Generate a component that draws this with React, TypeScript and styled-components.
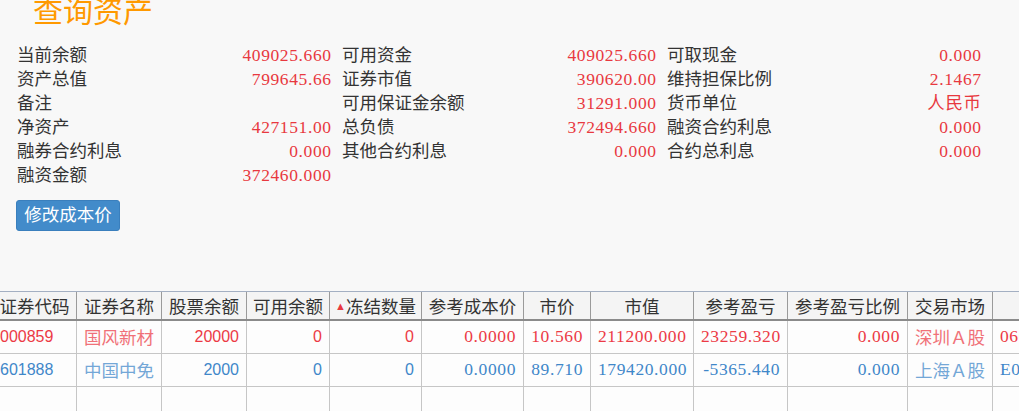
import React from 'react';
import styled, { createGlobalStyle } from 'styled-components';

const GlobalStyle = createGlobalStyle`
  html, body {
    margin: 0;
    padding: 0;
    background: #f8f8f8;
    overflow: hidden;
  }
  body {
    font-family: "Liberation Serif", "Noto Sans CJK SC", serif;
    color: #333;
  }
`;

const Page = styled.div`
  width: 1019px;
  height: 411px;
  overflow: hidden;
`;

const Title = styled.h1`
  margin: -3px 0 0 33px;
  height: 30px;
  font-size: 30px;
  line-height: 30px;
  font-weight: normal;
  color: #ff9900;
`;

const InfoGrid = styled.div`
  display: grid;
  grid-template-columns: repeat(3, 314px);
  column-gap: 11px;
  margin-top: 16px;
  padding-left: 17px;
  font-size: 17.5px;
  line-height: 24px;
`;

const InfoCell = styled.div`
  display: flex;
  justify-content: space-between;
  white-space: nowrap;
`;

const Label = styled.span`
  color: #333;
`;

const Value = styled.span`
  color: #e8383f;
  letter-spacing: 0.6px;
  margin-right: -0.6px;
`;

const ActionButton = styled.button`
  display: block;
  margin: 13px 0 0 16px;
  width: 104px;
  height: 31px;
  padding: 0;
  border: 1px solid #3a7fbd;
  border-radius: 3px;
  background: #428bca;
  color: #fff;
  font-family: inherit;
  font-size: 17.5px;
  line-height: 29px;
  cursor: pointer;
`;

const TableWrap = styled.div`
  margin: 60px 0 0 -8px;
`;

const Table = styled.table`
  table-layout: fixed;
  border-collapse: collapse;
  width: 1127px;
  font-size: 17.5px;
`;

const HeadCell = styled.th`
  height: 27px;
  padding: 0 4px;
  background: #f4f4f4;
  border-top: 1px solid #a3afc2;
  border-bottom: 2px solid #8a8a8a;
  border-left: 1px solid #9a9a9a;
  font-weight: normal;
  text-align: center;
  white-space: nowrap;
  color: #333;
  overflow: hidden;
`;

const SortMark = styled.span`
  color: #e8383f;
  font-size: 11px;
  vertical-align: 3px;
`;

const Row = styled.tr<{ $tone: 'up' | 'down' | 'none' }>`
  height: 33px;
  background: #fdfdfd;
  color: ${(p) => (p.$tone === 'up' ? '#ec3a45' : p.$tone === 'down' ? '#3f87c9' : '#333')};
`;

const Cell = styled.td<{ $align?: 'left' | 'right'; $kind?: 'int' | 'cjk' | 'dec' }>`
  padding: 0 7px;
  border: 1px solid #c6c6c6;
  text-align: ${(p) => p.$align ?? 'right'};
  white-space: nowrap;
  overflow: hidden;
  font-family: ${(p) =>
    p.$kind === 'int'
      ? '"Liberation Sans", "Noto Sans CJK SC", sans-serif'
      : '"Liberation Serif", "Noto Sans CJK SC", serif'};
  font-size: ${(p) => (p.$kind === 'int' ? '16px' : '17.5px')};
  letter-spacing: ${(p) => (p.$kind === 'dec' ? '0.6px' : 'normal')};
  opacity: ${(p) => (p.$kind === 'cjk' ? 0.72 : 1)};
`;

const info: [string, string][] = [
  ['当前余额', '409025.660'],
  ['可用资金', '409025.660'],
  ['可取现金', '0.000'],
  ['资产总值', '799645.66'],
  ['证券市值', '390620.00'],
  ['维持担保比例', '2.1467'],
  ['备注', ''],
  ['可用保证金余额', '31291.000'],
  ['货币单位', '人民币'],
  ['净资产', '427151.00'],
  ['总负债', '372494.660'],
  ['融资合约利息', '0.000'],
  ['融券合约利息', '0.000'],
  ['其他合约利息', '0.000'],
  ['合约总利息', '0.000'],
  ['融资金额', '372460.000'],
];

type Col = { title: string; width: number; kind: 'int' | 'cjk' | 'dec'; align?: 'left' | 'right'; sorted?: boolean };

const columns: Col[] = [
  { title: '证券代码', width: 84, kind: 'int', align: 'left' },
  { title: '证券名称', width: 85, kind: 'cjk', align: 'left' },
  { title: '股票余额', width: 85, kind: 'int' },
  { title: '可用余额', width: 83, kind: 'int' },
  { title: '冻结数量', width: 92, kind: 'int', sorted: true },
  { title: '参考成本价', width: 102, kind: 'dec' },
  { title: '市价', width: 67, kind: 'dec' },
  { title: '市值', width: 103, kind: 'dec' },
  { title: '参考盈亏', width: 94, kind: 'dec' },
  { title: '参考盈亏比例', width: 120, kind: 'dec' },
  { title: '交易市场', width: 85, kind: 'cjk', align: 'left' },
  { title: '股东代码', width: 127, kind: 'dec', align: 'left' },
];

const rows: { tone: 'up' | 'down'; cells: string[] }[] = [
  {
    tone: 'up',
    cells: ['000859', '国风新材', '20000', '0', '0', '0.0000', '10.560', '211200.000', '23259.320', '0.000', '深圳Ａ股', '0602318745'],
  },
  {
    tone: 'down',
    cells: ['601888', '中国中免', '2000', '0', '0', '0.0000', '89.710', '179420.000', '-5365.440', '0.000', '上海Ａ股', 'E073160582'],
  },
];

export default function App() {
  return (
    <Page>
      <GlobalStyle />
      <Title>查询资产</Title>
      <InfoGrid>
        {info.map(([label, value]) => (
          <InfoCell key={label}>
            <Label>{label}</Label>
            <Value>{value}</Value>
          </InfoCell>
        ))}
      </InfoGrid>
      <ActionButton type="button">修改成本价</ActionButton>
      <TableWrap>
        <Table>
          <colgroup>
            {columns.map((c) => (
              <col key={c.title} style={{ width: c.width }} />
            ))}
          </colgroup>
          <thead>
            <tr>
              {columns.map((c) => (
                <HeadCell key={c.title}>
                  {c.sorted && <SortMark>▲</SortMark>}
                  {c.title}
                </HeadCell>
              ))}
            </tr>
          </thead>
          <tbody>
            {rows.map((r) => (
              <Row key={r.cells[0]} $tone={r.tone}>
                {r.cells.map((v, i) => (
                  <Cell key={i} $align={columns[i].align} $kind={columns[i].kind}>
                    {v}
                  </Cell>
                ))}
              </Row>
            ))}
            <Row $tone="none">
              {columns.map((c) => (
                <Cell key={c.title} />
              ))}
            </Row>
          </tbody>
        </Table>
      </TableWrap>
    </Page>
  );
}
